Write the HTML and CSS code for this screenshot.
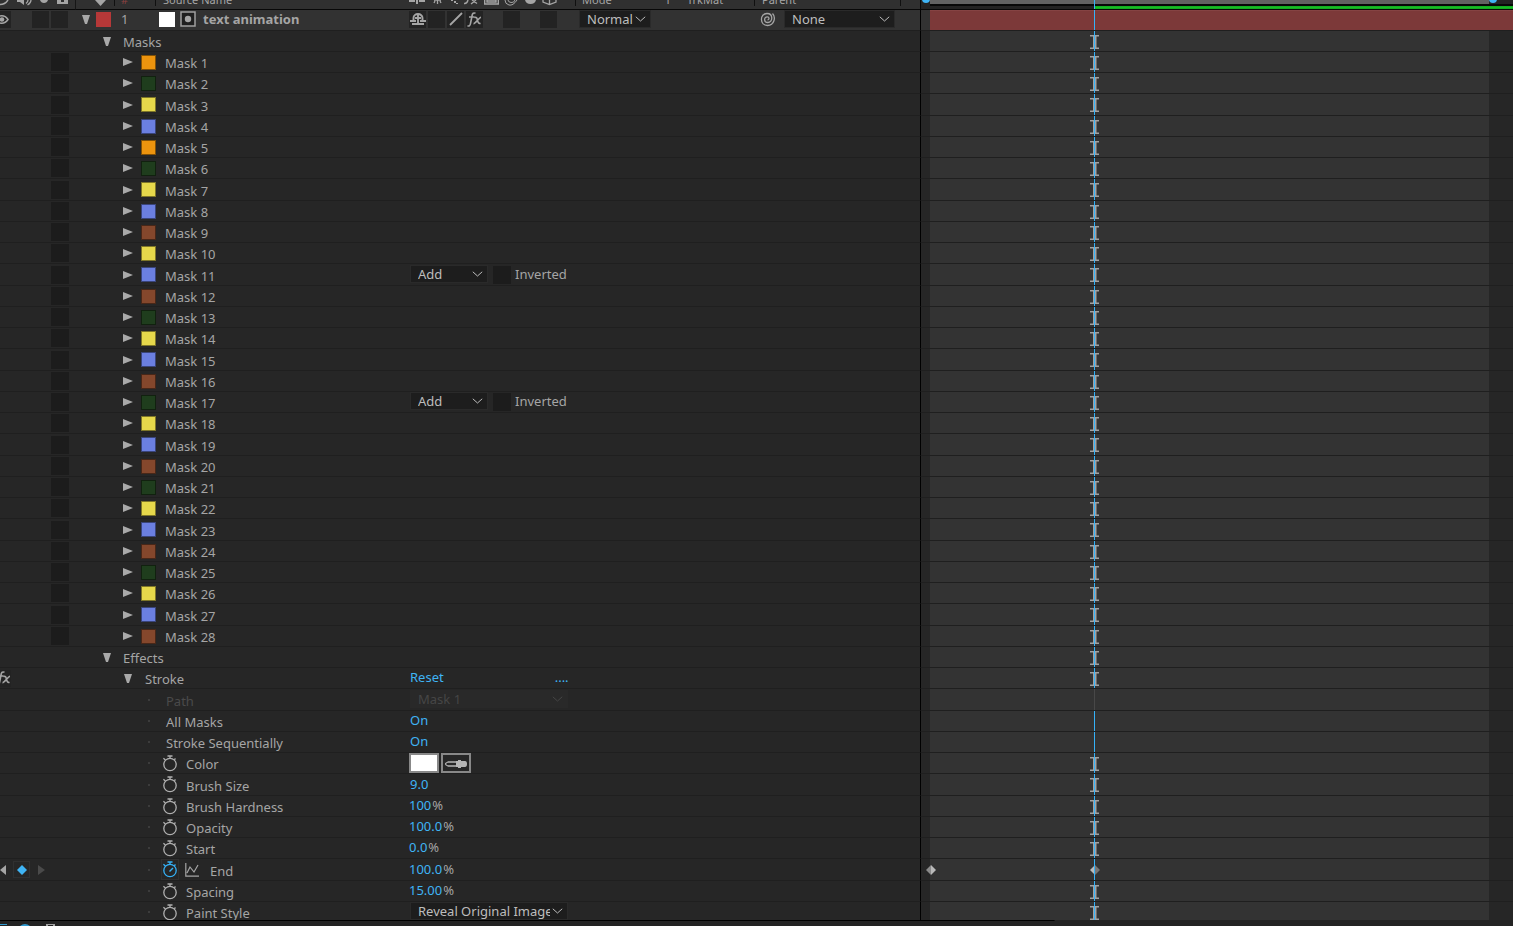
FILE: index.html
```html
<!DOCTYPE html>
<html lang="en">
<head>
<meta charset="utf-8">
<title>Timeline</title>
<link rel="stylesheet" href="styles.css">
</head>
<body>
<svg class="defs" aria-hidden="true">
  <symbol id="down" viewBox="0 0 8 11"><path d="M0 1h8L5 10H3z"/></symbol>
  <symbol id="right" viewBox="0 0 10 8"><path d="M0 0v8L10 4z"/></symbol>
  <symbol id="chevron" viewBox="0 0 11 6"><path d="M.8.8 5.500 5 10.200.8" fill="none" stroke="currentColor"/></symbol>
  <symbol id="watch" viewBox="0 0 14 17"><g fill="none" stroke="currentColor" stroke-width="1.300"><circle cx="7" cy="9.500" r="6.200"/><path d="M4.500 1h5M7 1v2.500M.4 3.200l2 1.800M12.500 3.500l-1.200 1.200"/></g></symbol>
  <symbol id="ibeam" viewBox="0 0 9 14"><path d="M0 0h9v1.500H6.500v11H9V14H0v-1.500h3V1.500H0z" fill="#a2a2a2"/></symbol>
  <symbol id="key" viewBox="0 0 10 10"><path d="M5 0v10L0 5z" fill="#8a8a8a"/><path d="M5 0v10l5-5z" fill="#bababa"/></symbol>
  <symbol id="key-end" viewBox="0 0 10 10"><path d="M5 0v10L0 5z" fill="#bababa"/><path d="M5 0v10l5-5z" fill="#777"/></symbol>
  <symbol id="shy" viewBox="0 0 16 14"><path d="M3.500 8V6a4.500 4 0 0 1 9 0v2M8 2v10M5 6h6" fill="none" stroke="currentColor" stroke-width="1.900"/><path d="M0 8h6v2H0zM10 8h6v2h-6zM2 11h12v2H2z"/></symbol>
  <symbol id="fx" viewBox="0 0 15 15"><g fill="none" stroke="currentColor" stroke-width="1.600"><path d="M8.500 1.200C6.500.4 5.500 1.500 5.200 3L3.500 11.500C3.200 13.500 2.200 14.300.5 13.800M2 5h5.500M7.500 5.500c2-.6 2.500.5 3 2.700s1.200 3.800 3 3M14 5.300c-2 .2-5.500 6.500-7.500 6.300"/></g></symbol>
</svg>

<main class="timeline">
  <header class="row head">
    <div class="cell av">
      <svg class="i9" viewBox="0 0 9 6"><path d="M0 4.500Q5 4.500 8 0" fill="none" stroke="currentColor" stroke-width="1.500"/></svg>
      <svg class="i15" viewBox="0 0 15 6"><path d="M0 0h7v5L3 2H0z"/><path d="M9 3.500Q11 2 11 0M10.500 5Q14 3 14 0" fill="none" stroke="currentColor" stroke-width="1.300"/></svg>
      <svg class="i9" viewBox="0 0 9 6"><path d="M0 0h8Q7 3 4 3T0 0"/></svg>
      <svg class="i11" viewBox="0 0 11 6"><path d="M0 0h4v2h3V0h4v4H0z"/></svg>
    </div>
    <div class="cell label">
      <span class="tag"><svg class="i13" viewBox="0 0 13 6"><path d="M1 0h11L6.500 6z"/></svg></span>
      <span class="num">#</span>
      <span class="source">Source Name</span>
    </div>
    <div class="cell modes">
      <span class="icons">
        <svg class="i16" viewBox="0 0 16 6"><path d="M0 0h6v2H0zM7 0h2v4H7zM10 0h6v2h-6z"/></svg>
        <svg class="i15" viewBox="0 0 15 6"><path d="M4 0h7M7.500 0v4M5 1 4 3M10 1l1 2" fill="none" stroke="currentColor" stroke-width="1.300"/></svg>
        <svg class="i9" viewBox="0 0 9 6"><path d="M1 0h2v1H1zM4 1h2v2H4zM6 3h2v1H6z"/></svg>
        <svg class="i15" viewBox="0 0 15 6"><path d="M0 3.500Q3 4 4 0M13 3.500 8 0M12 0 7 4" fill="none" stroke="currentColor" stroke-width="1.400"/></svg>
        <svg class="i15" viewBox="0 0 15 6"><path d="M.7 0v4h13.600V0M3 2V0h9v2z" fill="none" stroke="currentColor" stroke-width="1.400"/></svg>
        <svg class="i15" viewBox="0 0 15 6"><path d="M1 0q0 4 4 5t8-5M4 0q0 2 3 2.500T11 0" fill="none" stroke="currentColor"/></svg>
        <svg class="i13" viewBox="0 0 13 6"><path d="M1 0q1 4 5.500 4T12 0z"/></svg>
        <svg class="i15" viewBox="0 0 15 6"><path d="M1 0v2l6.500 2.500L14 2V0M7.500 0v4" fill="none" stroke="currentColor" stroke-width="1.300"/></svg>
      </span>
      <span class="h-mode">Mode</span><span class="h-t">T</span><span class="h-trk">TrkMat</span><span class="h-parent">Parent</span>
    </div>
    <div class="cell time ruler"><div class="work"><i class="knob start"></i><i class="knob end"></i></div><div class="cache"><i class="head-line"></i></div></div>
  </header>

  <section class="row layer">
    <div class="cell av">
      <button class="box eye" aria-label="Visible"><svg class="i9" viewBox="0 0 9 9"><path d="M0 1q5-1 8 3.500Q5 9 0 8" fill="none" stroke="currentColor" stroke-width="1.500"/><circle cx="2" cy="4.500" r="2.300"/></svg></button>
      <input type="checkbox" class="box" aria-label="Solo"><input type="checkbox" class="box" aria-label="Lock">
    </div>
    <div class="cell name">
      <button class="twirl" aria-label="Collapse layer"><svg class="down"><use href="#down"/></svg></button>
      <i class="swatch red"></i><span class="index">1</span><i class="solid"></i>
      <svg class="track-icon" viewBox="0 0 16 16"><rect x="1" y="1" width="14" height="14" fill="#1f1f1f" stroke="#a0a0a0" stroke-width="1.500"/><circle cx="8" cy="8" r="3.200"/></svg>
      <strong>text animation</strong>
    </div>
    <div class="cell modes">
      <span class="switches">
        <button class="box" aria-label="Shy"><svg class="i16"><use href="#shy"/></svg></button>
        <button class="box" aria-label="Collapse transformations"></button>
        <button class="box" aria-label="Quality"><svg class="i16" viewBox="0 0 16 14"><path d="M2 13 14 1" stroke="currentColor" stroke-width="1.800"/></svg></button>
        <button class="box" aria-label="Effects"><svg class="i15"><use href="#fx"/></svg></button>
        <i></i><button class="box" aria-label="Motion blur"></button><i></i><button class="box" aria-label="3D layer"></button>
      </span>
      <span class="pick blend"><select aria-label="Mode"><option>Normal</option></select><svg><use href="#chevron"/></svg></span>
      <button class="whip" aria-label="Parent pick whip"><svg viewBox="0 0 16 15"><path d="M12.500 1.500C16 5 14.500 13.500 7.500 13.500C-.5 13.500-.5 1.500 7 1.500C13.500 1.500 13 10.500 7.800 10.500C3.500 10.500 3.800 4.800 7.300 4.800C9.500 4.800 9.500 7.800 7.500 7.800" fill="none" stroke="currentColor" stroke-width="1.300"/></svg></button>
      <span class="pick parent"><select aria-label="Parent"><option>None</option></select><svg><use href="#chevron"/></svg></span>
    </div>
    <div class="cell time"><div class="bar"></div><i class="head-line"></i></div>
  </section>

  <section class="rows" id="rows"></section>

  <footer class="foot">
    <svg viewBox="0 0 60 5"><path d="M0 3h7v1H0zM20 5q5-4 10 0z" fill="#2f9ad0"/><path d="M46 3h9v2h-2V4h-5v1h-2z"/></svg>
  </footer>
</main>
<script src="app.js"></script>
</body>
</html>
```
FILE: styles.css
```css
* { box-sizing: border-box; }
body {
  margin: 0;
  background: #262626;
  color: #a5a5a5;
  font: 13px/18px "Noto Sans", sans-serif;
}
button, input, select { font: inherit; color: inherit; margin: 0; padding: 0; border: 0; background: none; border-radius: 0; }
svg { display: block; fill: currentColor; flex: none; }
.defs { position: absolute; width: 0; height: 0; }

.timeline { display: flex; flex-direction: column; height: 100vh; overflow: hidden; }
.row {
  display: grid;
  grid-template-columns: 76px 333px minmax(0, 511fr) minmax(0, 593fr);
  grid-template-rows: minmax(0, 1fr);
  height: 21px;
  flex: none;
}
.cell { display: flex; align-items: center; min-width: 0; border-bottom: 1px solid #1f1f1f; white-space: nowrap; }

.i9 { width: 9px; height: 9px; }
.i11 { width: 11px; height: 9px; }
.i13 { width: 13px; height: 9px; }
.i15 { width: 15px; height: 15px; }
.i16 { width: 16px; height: 14px; }

/* column headings */
.head { height: 10px; background: #303030; font-size: 11px; line-height: 12px; overflow: hidden; }
.head .cell { border-color: #080808; align-items: flex-start; overflow: hidden; height: 10px; }
.head svg { height: 6px; }
.head .av { gap: 8px; justify-content: space-between; padding-right: 10px; border-right: 1px solid #161616; }
.head span { height: 6px; display: flex; align-items: flex-end; border-right: 1px solid #101010; }
.head .tag { width: 39px; padding-left: 18px; align-items: flex-start; }
.head .num { width: 41px; padding-left: 6px; color: #8b4040; }
.head .source { width: 240px; padding-left: 7px; border: 0; }
.head .icons { width: 167px; gap: 5px; align-items: flex-start; }
.head .h-mode { width: 86px; padding-left: 6px; border: 0; }
.head .h-t { width: 14px; border: 0; padding-left: 3px; }
.head .h-trk { width: 79px; padding-left: 11px; }
.head .h-parent { width: 146px; padding-left: 7px; }
.head .ruler { display: block; padding: 0 24px 0 9px; background: #232323; overflow: visible; }
.work { position: relative; height: 4px; background: #626262; }
.knob { position: absolute; top: -5px; width: 8px; height: 8px; border-radius: 4px; background: #3fb4f5; }
.knob.start { left: -8px; }
.knob.end { right: -8px; }
.cache { position: relative; height: 5px; margin-right: -24px; border-top: 2px solid #080808; background: linear-gradient(#12a51f, #17bd25, #12a51f) right / 71.900% 100% no-repeat; }

/* timeline column */
.time { border-left: 1px solid #000; padding: 0 24px 0 9px; align-items: stretch; }
.track { position: relative; flex: 1; background: #333; }
.bar { flex: 1; margin-right: -24px; background: #7c3939; border-top: 1px solid #854343; }
.head-line { position: absolute; top: 0; bottom: 0; left: 29.340%; width: 1px; background: #35b2f8; }
.layer .time { position: relative; }
.layer .head-line { left: 29.220%; }
.cache .head-line { left: 28.130%; top: -6px; }
.track svg { position: absolute; top: 4px; left: 29.340%; margin-left: -4px; width: 9px; height: 14px; }
.track svg.key { top: 6px; height: 10px; width: 10px; }
.track svg.first { left: 0; }
.head-line.off { background: #484848; }

/* layer row */
.layer { background: #323232; }
.layer .cell:not(.time) { padding-bottom: 2px; }
.box { appearance: none; width: 17px; height: 17px; background: #232323; flex: none; display: flex; align-items: center; justify-content: center; }
.layer .av { gap: 2px; }
.box.eye { width: 11px; margin-right: 19px; justify-content: flex-start; }
.twirl { width: 12px; height: 16px; display: flex; align-items: center; justify-content: center; color: #a9a9a9; flex: none; }
.down { width: 8px; height: 11px; }
.right { width: 10px; height: 8px; }
.layer .name { padding-left: 4px; }
.swatch { width: 15px; height: 15px; flex: none; border: 1px solid rgb(0 0 0 / 45%); }
.red { background: #b63838; margin-left: 4px; border: 0; }
.index { width: 48px; padding-left: 10px; }
.solid { width: 16px; height: 15px; background: #fff; }
.track-icon { width: 16px; height: 16px; margin: 0 7px 0 5px; }
.switches { display: flex; gap: 2px; width: 170px; flex: none; }
.switches i { width: 16px; }
.pick { position: relative; height: 18px; display: block; background: #1d1d1d; border: 1px solid #2a2a2a; color: #bdbdbd; }
.pick select { appearance: none; width: 100%; height: 16px; padding: 0 18px 0 7px; line-height: 16px; display: block; outline: 0; }
.pick svg { position: absolute; right: 4px; top: 5px; width: 11px; height: 6px; pointer-events: none; }
.blend { width: 72px; }
.blend select { padding-right: 0; }
.whip { width: 16px; margin: 0 8px 0 109px; }
.whip svg { width: 16px; height: 15px; }
.parent { width: 111px; }

/* property rows */
.rows { flex: 1; min-height: 0; overflow: hidden; }
.rows .row:nth-child(4n) { height: 22px; }
.lock { width: 18px; height: 18px; margin-left: 51px; background: #1c1c1c; }
.rows .cell > span:not(.pick, .unit), .prop label { padding-top: 2px; }
.vals > * { margin-bottom: 2px; }
.vals .pick { margin-left: 1px; }
.group { padding-left: 25px; gap: 10px; }
.effect { padding-left: 46px; gap: 11px; }
.mask { padding-left: 46px; gap: 9px; }
.mask .swatch { margin-left: -2px; }
.prop { padding-left: 72px; }
.prop::before { content: ""; width: 2px; height: 2px; background: #3c3c3c; margin-right: 13px; }
.prop label { padding-left: 3px; }
.prop .watch + label { padding-left: 9px; }
.prop .graph + label { padding-left: 11px; }
.watch { width: 14px; height: 17px; color: #b0b0b0; flex: none; }
.watch svg { width: 14px; height: 17px; }
.watch.on { color: #35b2f8; outline: 1px solid #303030; outline-offset: 1px; }
.graph { width: 14px; height: 14px; margin-left: 8px; }
.orange { background: #ec940e; }
.green { background: #1f3d1d; }
.yellow { background: #e6d84b; }
.blue { background: #6b7fe0; }
.brown { background: #84472c; }
.value { color: #3fb4f5; }
.unit { padding-left: 1px; }
.text { padding-left: 1px; }
.more { margin-left: 111px; }
.dim { color: #4a4a4a; }
.dim .pick { background: #292929; color: #464646; border-color: #292929; }
.dim .pick select { opacity: 1; color: #464646; }
.add { width: 78px; }
.wide { width: 158px; }
.pick.wide select { padding-right: 17px; text-overflow: clip; }
.vals .invert { background: #1c1c1c; margin: 0 4px 0 5px; width: 18px; height: 18px; }
.chip, .dropper { border: 2px solid #888; height: 20px; width: 30px; background: #fff; margin-bottom: 0; }
.dropper { background: #262626; margin-left: 2px; color: #b5b5b5; }
.dropper svg { width: 26px; height: 14px; }
.keys { display: flex; align-items: center; }
.keys button { height: 17px; display: flex; align-items: center; }
.keys svg { height: 10px; width: 7px; }
.keys .add-key { width: 17px; border: 1px solid #303030; margin: 0 8px 0 6px; justify-content: center; color: #3fb4f5; }
.keys .add-key svg { width: 10px; }
.fx-on { width: 11px; justify-content: flex-end; }

.foot { height: 6px; flex: none; background: linear-gradient(#000, #000) 0 0 / 69.700% 1px no-repeat #232323; padding-top: 1px; }
.foot svg { width: 60px; height: 5px; }
```
FILE: app.js
```js
const colors = "orange green yellow blue orange green yellow blue brown yellow blue brown green yellow blue brown green yellow blue brown green yellow blue brown green yellow blue brown".split(" ");
const use = (id, cls = id) => `<svg class="${cls}"><use href="#${id}"/></svg>`;
const twirl = (id, label) => `<button class="twirl" aria-label="${label}">${use(id)}</button>`;
const pick = (text, cls, label, attrs = "") =>
  `<span class="pick ${cls}"><select aria-label="${label}" ${attrs}><option>${text}</option></select>${use("chevron")}</span>`;
const line = '<i class="head-line"></i>';
const beam = use("ibeam") + line;
const row = (av, kind, name, value, track = beam, cls = "") =>
  `<div class="row ${cls}"><div class="cell av">${av}</div><div class="cell ${kind}">${name}</div>` +
  `<div class="cell vals">${value}</div><div class="cell time"><div class="track">${track}</div></div></div>`;

let html = row("", "group", twirl("down", "Collapse") + "<span>Masks</span>", "");
colors.forEach((color, i) => {
  const n = i + 1;
  const mode = n === 11 || n === 17
    ? pick("Add", "add", `Mask ${n} mode`) +
      `<input type="checkbox" class="box invert" id="inv${n}"><label for="inv${n}">Inverted</label>`
    : "";
  html += row(`<input type="checkbox" class="box lock" aria-label="Lock mask ${n}">`, "mask",
    twirl("right", "Expand") + `<i class="swatch ${color}"></i><span>Mask ${n}</span>`, mode);
});
html += row("", "group", twirl("down", "Collapse") + "<span>Effects</span>", "");
html += row(`<button class="box fx-on" aria-label="Effect enabled">${use("fx", "i15")}</button>`, "effect",
  twirl("down", "Collapse") + "<span>Stroke</span>",
  '<button class="value text">Reset</button><button class="value more" aria-label="Options">....</button>');

const num = (id, v, unit = "") =>
  `<button class="value${unit ? "" : " text"}" id="${id}">${v}</button>` + (unit && `<span class="unit">${unit}</span>`);
const label = (id, text) => `<label for="${id}">${text}</label>`;
const watch = `<button class="watch" aria-label="Animate">${use("watch", "")}</button>`;
html += row("", "prop", label("path", "Path"), pick("Mask 1", "wide", "Path", 'id="path" disabled'), '<i class="head-line off"></i>', "dim");
html += row("", "prop", label("all", "All Masks"), num("all", "On"), line);
html += row("", "prop", label("seq", "Stroke Sequentially"), num("seq", "On"), line);
html += row("", "prop", watch + label("color", "Color"),
  '<button class="chip" id="color"></button><button class="dropper" aria-label="Eyedropper"><svg viewBox="0 0 26 14"><path d="M13 6H5Q0 8 5 10h8" fill="none" stroke="currentColor" stroke-width="1.300"/><path d="M13 5h2V4h3v1h4q2 0 2 3t-2 3h-4v1h-3v-1h-2z"/></svg></button>');
html += row("", "prop", watch + label("size", "Brush Size"), num("size", "9.0"));
html += row("", "prop", watch + label("hard", "Brush Hardness"), num("hard", "100", "%"));
html += row("", "prop", watch + label("opacity", "Opacity"), num("opacity", "100.0", "%"));
html += row("", "prop", watch + label("start", "Start"), num("start", "0.0", "%"));
html += row(
  '<div class="keys"><button aria-label="Previous keyframe"><svg viewBox="0 0 7 10"><path d="M6 0v10L0 5z"/></svg></button>' +
  '<button class="add-key" aria-label="Keyframe"><svg viewBox="0 0 10 10"><path d="M5 0l5 5-5 5-5-5z"/></svg></button>' +
  '<button class="dim" aria-label="Next keyframe"><svg viewBox="0 0 7 10"><path d="M0 0v10l7-5z"/></svg></button></div>',
  "prop",
  `<button class="watch on" aria-label="Animate"><svg viewBox="0 0 14 17"><use href="#watch"/><path d="M6.500 10.500 10 7" stroke="currentColor" stroke-width="1.400"/></svg></button>` +
  '<svg class="graph" viewBox="0 0 14 14"><path d="M.8 0v13.200H14M2 10 5 4l4 5 4-7" fill="none" stroke="currentColor" stroke-width="1.200"/></svg>' +
  label("end", "End"), num("end", "100.0", "%"),
  use("key", "key first") + use("key-end", "key") + line);
html += row("", "prop", watch + label("spacing", "Spacing"), num("spacing", "15.00", "%"));
html += row("", "prop", watch + label("style", "Paint Style"), pick("Reveal Original Image", "wide", "Paint Style", 'id="style"'));
document.getElementById("rows").innerHTML = html;
```
